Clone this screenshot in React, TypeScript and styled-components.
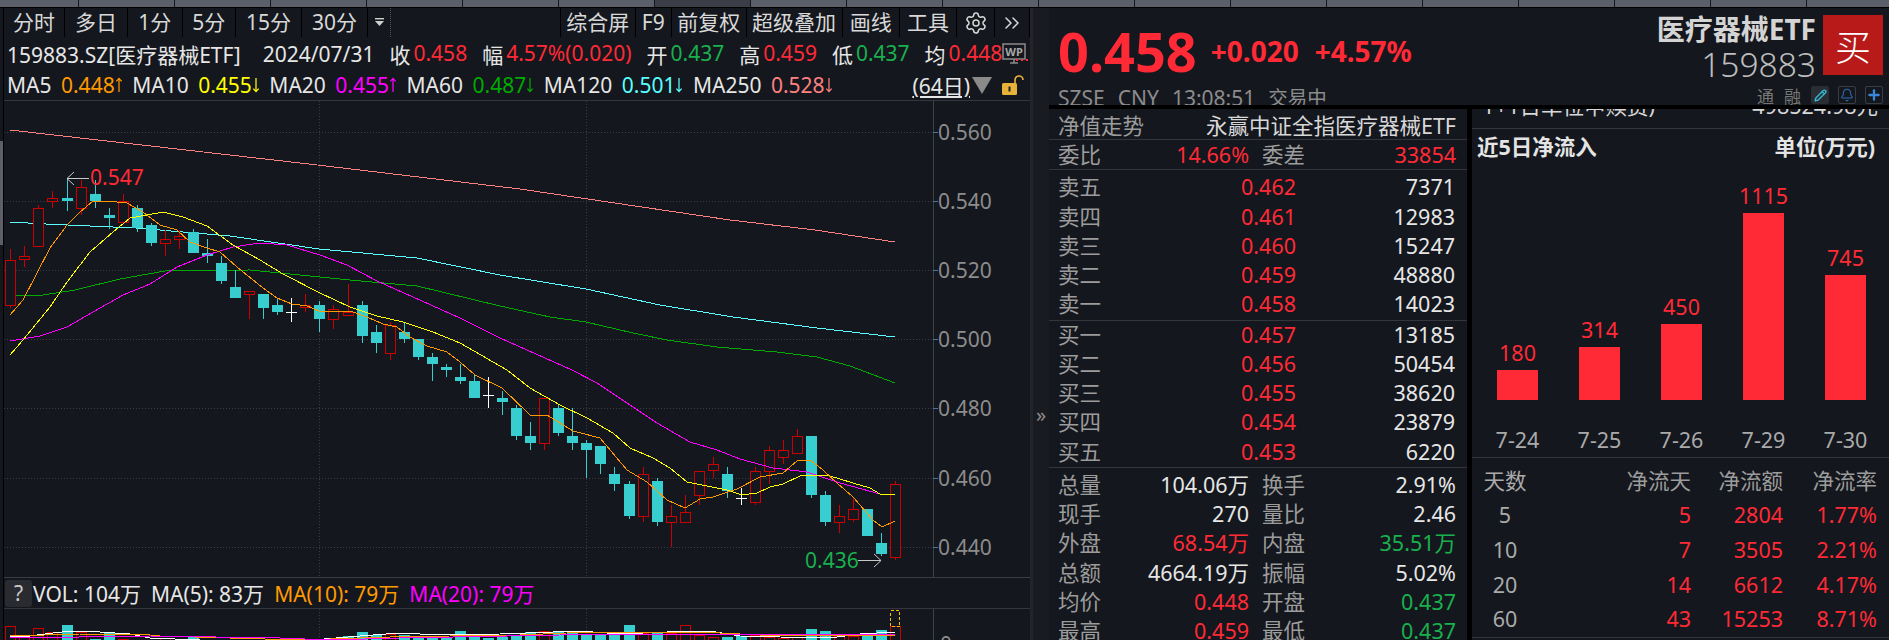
import * as React from "react";
import styled, { createGlobalStyle } from "styled-components";
import { Bell, ChevronsRight, Pencil, Plus, Settings } from "lucide-react";

const RED = "#ff2a36";
const GREEN = "#19b04d";
const BG = "#14171d";
const LINE = "#34363c";
const LABEL = "#9c9c9c";

const GlobalStyle = createGlobalStyle`
  html, body {
    margin: 0;
    background: ${BG};
    overflow: hidden;
  }
  body {
    font-family: "Noto Sans", "Noto Sans CJK SC", sans-serif;
    color: #e6e6e6;
  }
`;

const Page = styled.div`
  display: flex;
  flex-direction: column;
  width: 1889px;
  height: 640px;
  overflow: hidden;
  background: ${BG};
`;

const TabStrip = styled.div`
  display: flex;
  flex: none;
  height: 7px;
  border-bottom: 1px solid #000;
`;

const Tab = styled.div<{ $active?: boolean; $first?: boolean }>`
  flex: none;
  box-sizing: border-box;
  width: ${(p) => (p.$first ? 79 : 96)}px;
  background: ${(p) => (p.$active ? "#3b3e47" : "#5a5f6a")};
  border-right: 1px solid #14171d;
`;

const Body = styled.div`
  display: flex;
  flex: 1;
  min-height: 0;
`;

const LeftStrip = styled.div`
  flex: none;
  box-sizing: border-box;
  width: 4px;
  border-right: 1px solid #000;
  padding-top: 133px;
`;

const StripHandle = styled.div`
  width: 3px;
  height: 104px;
  background: #5e5f68;
`;

const ChartPane = styled.div`
  display: flex;
  flex: none;
  flex-direction: column;
  width: 1026px;
`;

const Toolbar = styled.div`
  display: flex;
  flex: none;
  height: 29px;
`;

const Tool = styled.div<{ $w: number }>`
  display: flex;
  flex: none;
  align-items: center;
  justify-content: center;
  box-sizing: border-box;
  width: ${(p) => p.$w}px;
  border-right: 1px solid #000;
  font-size: 21px;
  line-height: 29px;
  color: #d8d8d8;
  white-space: nowrap;
`;

const MoreCell = styled.div`
  display: flex;
  flex: none;
  align-items: center;
  justify-content: center;
  width: 22px;
  border-right: 1px dotted #555;
`;

const Spacer = styled.div`
  flex: 1;
  border-right: 1px solid #000;
`;

const InfoRow = styled.div`
  display: flex;
  flex: none;
  align-items: center;
  gap: 15px;
  height: 33px;
  padding-left: 3px;
  font-size: 21px;
  white-space: nowrap;
`;

const CodeText = styled.span`
  margin-right: 7px;
`;

const Field = styled.span`
  display: flex;
  gap: 3px;
`;

const Colored = styled.span<{ $c: string }>`
  color: ${(p) => p.$c};
`;

const WpBadge = styled.svg`
  position: absolute;
  left: 1002px;
  top: 43px;
`;

const MaRow = styled.div`
  display: flex;
  flex: none;
  align-items: center;
  gap: 9.5px;
  height: 30px;
  padding-left: 3px;
  border-bottom: 1px solid ${LINE};
  font-size: 21px;
  white-space: nowrap;
`;

const MaValue = styled.span<{ $c: string }>`
  display: flex;
  align-items: center;
  color: ${(p) => p.$c};
`;

const RangeLabel = styled.span`
  margin-left: auto;
  text-decoration: underline;
  text-underline-offset: 2px;
`;

const RangeTriangle = styled.span`
  width: 0;
  height: 0;
  margin-left: -8px;
  border-left: 10px solid transparent;
  border-right: 10px solid transparent;
  border-top: 17px solid #8a8a8a;
`;

const LockIcon = styled.svg`
  margin: 0 6px 0 0;
`;

const Plot = styled.svg`
  display: block;
  flex: none;
`;

const AxisText = styled.text`
  font-size: 21px;
  fill: #8c8c8c;
`;

const PeakText = styled.text<{ $c: string }>`
  font-size: 21px;
  fill: ${(p) => p.$c};
`;

const VolHeader = styled.div`
  display: flex;
  flex: none;
  box-sizing: border-box;
  align-items: center;
  gap: 10px;
  height: 32px;
  padding-left: 1px;
  border-top: 1px solid #3c3d43;
  border-bottom: 1px solid ${LINE};
  font-size: 21px;
  white-space: nowrap;
`;

const HelpButton = styled.span`
  display: flex;
  align-items: center;
  justify-content: center;
  width: 27px;
  height: 27px;
  margin-right: -9px;
  border-radius: 3px;
  background: #2a2b30;
  color: #c9c9c9;
`;

const Gutter = styled.div`
  display: flex;
  flex: none;
  align-items: center;
  justify-content: center;
  box-sizing: border-box;
  width: 19px;
  padding-top: 180px;
  border-left: 3px solid #23252b;
  background: #191b21;
  color: #8c8c8c;
  font-size: 20px;
`;

const QuotePane = styled.div`
  display: flex;
  flex: 1;
  flex-direction: column;
  min-width: 0;
`;

const QuoteHeader = styled.header`
  display: flex;
  flex: none;
  justify-content: space-between;
  height: 97px;
  overflow: hidden;
  border-bottom: 4px solid #000;
`;

const PriceBlock = styled.div`
  padding: 8px 0 0 9px;
`;

const PriceLine = styled.div`
  display: flex;
  align-items: center;
  height: 70px;
  color: ${RED};
  font-weight: 700;
  white-space: nowrap;
`;

const BigPrice = styled.span`
  margin-right: 14px;
  font-size: 54px;
`;

const Change = styled.span`
  margin-right: 16px;
  font-size: 28px;
`;

const MarketLine = styled.div`
  display: flex;
  gap: 13px;
  font-size: 21px;
  line-height: 24px;
  color: #8c8c8c;
  white-space: nowrap;
`;

const MarketState = styled.span`
  font-size: 19.5px;
`;

const NameBlock = styled.div`
  display: flex;
  flex-direction: column;
  align-items: flex-end;
  padding: 7px 6px 0 0;
`;

const NameRow = styled.div`
  display: flex;
  gap: 7px;
`;

const NameCol = styled.div`
  display: flex;
  flex-direction: column;
  align-items: flex-end;
  margin-top: -4px;
`;

const StockName = styled.div`
  font-size: 28px;
  font-weight: 700;
  line-height: 36px;
  color: #d4d4d4;
  white-space: nowrap;
`;

const StockCode = styled.div`
  font-size: 33.5px;
  font-weight: 300;
  line-height: 34px;
  color: #bdbdbd;
`;

const BuyButton = styled.div`
  display: flex;
  align-items: center;
  justify-content: center;
  width: 60px;
  height: 60px;
  background: #b81a1a;
  color: #fff;
  font-size: 36px;
  font-weight: 300;
`;

const MetaRow = styled.div`
  display: flex;
  align-items: center;
  gap: 9px;
  height: 18px;
  margin-top: 5px;
  font-size: 17px;
  color: #777;
`;

const MetaWord = styled.span`
  margin-right: 1px;
`;

const MetaIcon = styled.span<{ $c: string; $fill?: boolean }>`
  display: flex;
  align-items: center;
  justify-content: center;
  box-sizing: border-box;
  width: 18px;
  height: 18px;
  border-radius: 2px;
  background: ${(p) => (p.$fill ? "#2a2d33" : "transparent")};
  border: 1px solid ${(p) => (p.$fill ? "#2a2d33" : "#3a3d44")};
  color: ${(p) => p.$c};
`;

const Columns = styled.div`
  display: flex;
  flex: 1;
  min-height: 0;
`;

const OrderBook = styled.section`
  flex: none;
  width: 418px;
  border-right: 5px solid #000;
  font-size: 21.5px;
  color: ${LABEL};
`;

const BookTitle = styled.div`
  display: flex;
  justify-content: space-between;
  box-sizing: border-box;
  height: 31px;
  padding: 0 11px 0 9px;
  border-bottom: 1px solid ${LINE};
  line-height: 33px;
  white-space: nowrap;
`;

const FundName = styled.span`
  color: #d8d8d8;
`;

const Block = styled.div<{ $pad: number }>`
  padding-top: ${(p) => p.$pad}px;
  border-bottom: 1px solid ${LINE};
`;

const StatsBlock = styled.div`
  padding-top: 2px;
`;

const StatRow = styled.div`
  display: grid;
  grid-template-columns: 60px 131px 73px 134px;
  height: 29.25px;
  padding-left: 9px;
  line-height: 29px;
  white-space: nowrap;
`;

const PriceRow = styled.div`
  display: grid;
  grid-template-columns: 60px 178px 159px;
  height: 29.25px;
  padding-left: 9px;
  line-height: 28px;
`;

const Label = styled.span<{ $indent?: boolean }>`
  padding-left: ${(p) => (p.$indent ? 13 : 0)}px;
`;

const Num = styled.span<{ $c?: string }>`
  text-align: right;
  color: ${(p) => p.$c ?? "#e6e6e6"};
`;

const FundPanel = styled.section`
  flex: 1;
  min-width: 0;
  font-size: 21.5px;
`;

const ClippedRow = styled.div`
  box-sizing: border-box;
  height: 20px;
  overflow: hidden;
  border-bottom: 1px solid ${LINE};
`;

const ClippedInner = styled.div`
  display: flex;
  justify-content: space-between;
  margin-top: -15px;
  padding: 0 11px 0 11px;
  font-size: 21.5px;
  line-height: 24px;
  color: #d8d8d8;
`;

const FlowTitle = styled.div`
  display: flex;
  justify-content: space-between;
  height: 36px;
  padding: 0 14px 0 5px;
  font-weight: 700;
  line-height: 35px;
  color: #e4e4e4;
`;

const BarChart = styled.div`
  display: grid;
  grid-template-columns: repeat(5, 82px);
  align-items: end;
  height: 235px;
  padding-left: 4.5px;
`;

const BarCol = styled.div`
  display: flex;
  flex-direction: column;
  align-items: center;
`;

const BarValue = styled.span`
  margin-bottom: 4px;
  line-height: 26px;
  color: ${RED};
`;

const Bar = styled.div`
  width: 41px;
  background: ${RED};
`;

const DateRow = styled.div`
  display: grid;
  grid-template-columns: repeat(5, 82px);
  box-sizing: border-box;
  height: 58px;
  padding: 27px 0 0 4.5px;
  border-bottom: 1px solid ${LINE};
  line-height: 26px;
  color: #aaa;
  text-align: center;
`;

const FlowTable = styled.div`
  padding-top: 5.5px;
`;

const FlowRow = styled.div`
  display: grid;
  grid-template-columns: 66px 153px 92px 94px;
  height: 34.7px;
  line-height: 34.7px;
  text-align: right;
`;

const FlowDays = styled.span`
  color: #aaa;
  text-align: center;
`;

const FlowHead = styled.span`
  color: ${LABEL};
`;

const FlowNum = styled.span`
  color: ${RED};
`;

const FlowEnd = styled.div`
  border-top: 1px solid ${LINE};
`;

type Candle = [string, number, number, number, number];

const candles: Candle[] = [
  ["r", 249, 260, 305, 308], ["r", 246, 256, 259, 267], ["r", 205, 208, 246, 246], ["r", 191, 198, 201, 208],
  ["t", 178, 198, 201, 211], ["r", 180, 187, 208, 215], ["t", 180, 194, 201, 208], ["t", 208, 215, 218, 229],
  ["r", 194, 201, 222, 222], ["t", 205, 208, 228, 232], ["t", 223, 225, 243, 246], ["r", 230, 239, 243, 256],
  ["r", 230, 236, 239, 249], ["t", 229, 232, 253, 253], ["t", 239, 253, 256, 263], ["t", 256, 263, 281, 284],
  ["t", 270, 287, 298, 298], ["r", 291, 291, 294, 319], ["t", 294, 294, 308, 319], ["t", 298, 305, 312, 315],
  ["w", 298, 312, 312, 322], ["r", 294, 305, 307, 312], ["t", 301, 305, 319, 332], ["r", 305, 309, 319, 329],
  ["r", 284, 312, 315, 315], ["t", 301, 305, 336, 343], ["t", 325, 332, 343, 353], ["r", 322, 325, 353, 360],
  ["t", 322, 332, 339, 343], ["t", 339, 339, 357, 360], ["t", 353, 357, 364, 381], ["t", 364, 367, 370, 377],
  ["t", 364, 377, 381, 384], ["t", 374, 381, 398, 398], ["w", 377, 395, 395, 408], ["t", 391, 398, 402, 415],
  ["t", 405, 408, 436, 440], ["t", 422, 436, 443, 450], ["r", 398, 398, 443, 450], ["t", 405, 408, 433, 436],
  ["t", 408, 436, 443, 450], ["t", 440, 443, 450, 478], ["t", 446, 446, 464, 474], ["t", 467, 474, 484, 491],
  ["t", 481, 484, 516, 519], ["r", 467, 474, 516, 522], ["t", 478, 481, 522, 526], ["r", 505, 516, 522, 547],
  ["r", 495, 512, 522, 522], ["r", 471, 471, 495, 505], ["r", 457, 464, 470, 478], ["t", 467, 474, 491, 498],
  ["w", 488, 498, 498, 505], ["r", 467, 471, 502, 505], ["r", 446, 450, 471, 484], ["r", 440, 450, 457, 464],
  ["r", 429, 436, 453, 453], ["t", 436, 436, 495, 498], ["t", 491, 495, 522, 526], ["r", 505, 516, 522, 533],
  ["r", 498, 509, 519, 522], ["t", 509, 509, 536, 536], ["t", 533, 543, 554, 556], ["r", 481, 484, 557, 560],
];

const volumeTops = [
  626, 636, 628, 632, 625, 632, 639, 633, 639, 641, 641, 638, 641, 637, 641, 641,
  641, 641, 641, 641, 641, 641, 641, 641, 636, 632, 635, 634, 635, 636, 637, 638,
  631, 635, 638, 637, 636, 632, 631, 632, 633, 634, 634, 634, 625, 633, 632, 633,
  625, 635, 637, 637, 636, 635, 637, 638, 637, 629, 631, 636, 636, 633, 630, 626,
];

const ma5 = "10,315 23,300 50,248 67,225 80,212 93,201 107,201 127,203 143,212 160,225 177,230 190,242 207,248 220,252 237,267 263,288 277,298 292,304 307,306 319,311 350,311 367,317 383,324 397,327 410,337 427,346 447,352 460,362 475,375 502,388 530,415 547,415 573,431 600,438 627,470 647,482 667,500 685,508 700,499 713,497 737,489 760,477 783,473 797,461 810,460 823,470 837,483 853,497 873,520 882,527 895,521";
const ma10 = "10,355 23,340 50,307 67,282 90,252 113,232 130,218 147,215 163,212 183,217 207,226 233,245 260,260 283,274 320,293 350,307 377,316 403,322 433,332 460,343 507,370 530,388 560,405 587,418 613,433 630,448 653,458 670,468 687,482 707,486 727,490 742,495 757,493 770,487 783,484 800,476 817,475 830,476 853,483 870,488 880,494 895,495";
const ma20 = "10,341 40,336 67,327 93,312 123,295 150,284 177,267 207,255 233,247 260,243 287,245 320,255 347,265 377,281 413,297 460,318 500,338 572,370 597,383 627,403 657,423 690,442 717,450 740,459 773,468 807,472 840,483 880,494 895,495";
const ma60 = "10,296 40,295.5 75,290 120,279 165,271 200,270.5 250,270 290,274 350,280 417,286 500,306 550,317 586,322 633,333 667,340 717,347 777,352 817,357 850,366 895,383";
const ma120 = "10,222 46,224 90,226 136,228 230,236 319,249 417,258 500,275 586,289 660,305 733,317 817,328 895,337";
const ma250 = "10,130 309,164 520,189 730,220 815,230 895,242";
const volWhite = "10,637 30,636 45,634 70,631 100,632 130,634 150,638 200,640 300,641 360,636 400,633 440,635 500,634 580,631 620,634 690,631 710,631 740,636 780,637 830,638 860,634 895,632";
const volOrange = "10,636 80,634 140,634 160,636 300,640 390,637 450,636 520,635 590,632 700,632 720,633 760,635 895,635";
const volMagenta = "10,638 150,636 280,638 330,640 400,638 560,635 895,634";

const gridYs = [132, 201, 270, 339, 408, 478, 547];
const axisLabels = ["0.560", "0.540", "0.520", "0.500", "0.480", "0.460", "0.440"];

const candleX = (i: number) => Math.round(10.3 + 14.05 * i);
const teal = "#38cdcf";
const candleRed = "#cc0000";

const CandleMark = ({ c, i }: { c: Candle; i: number }) => {
  const [kind, high, top, bottom, low] = c;
  const x = candleX(i);
  if (kind === "w") {
    return (
      <g stroke="#fff">
        <line x1={x + 0.5} x2={x + 0.5} y1={high} y2={low} />
        <line x1={x - 5} x2={x + 6} y1={top + 0.5} y2={top + 0.5} />
      </g>
    );
  }
  const color = kind === "r" ? candleRed : teal;
  return (
    <g>
      <line x1={x + 0.5} x2={x + 0.5} y1={high} y2={top} stroke={color} />
      <line x1={x + 0.5} x2={x + 0.5} y1={bottom} y2={low} stroke={color} />
      {kind === "r" ? (
        <rect x={x - 4.5} y={top + 0.5} width={10} height={bottom - top} fill={BG} stroke={color} />
      ) : (
        <rect x={x - 5} y={top} width={11} height={bottom - top} fill={color} />
      )}
    </g>
  );
};

const MaLine = ({ points, color }: { points: string; color: string }) => (
  <polyline points={points} fill="none" stroke={color} strokeWidth={1} />
);

const PriceChart = () => (
  <Plot width={1026} height={476} viewBox="4 101 1026 476" shapeRendering="crispEdges">
    {gridYs.map((y) => (
      <line key={y} x1={4} x2={933} y1={y + 0.5} y2={y + 0.5} stroke="#3a3c42" strokeDasharray="1 2" />
    ))}
    <line x1={319.5} x2={319.5} y1={101} y2={577} stroke="#3a3c42" strokeDasharray="1 2" />
    <line x1={586.5} x2={586.5} y1={101} y2={577} stroke="#3a3c42" strokeDasharray="1 2" />
    <line x1={933.5} x2={933.5} y1={101} y2={577} stroke="#3f4147" />
    {gridYs.map((y, i) => (
      <g key={y}>
        <line x1={933} x2={938} y1={y + 0.5} y2={y + 0.5} stroke="#5570a0" />
        <AxisText x={938} y={y + 8} shapeRendering="auto">
          {axisLabels[i]}
        </AxisText>
      </g>
    ))}
    <MaLine points={ma250} color="#ff8080" />
    <MaLine points={ma120} color="#5affff" />
    <MaLine points={ma60} color="#00aa00" />
    {candles.map((c, i) => (
      <CandleMark key={i} c={c} i={i} />
    ))}
    <MaLine points={ma20} color="#ff00ff" />
    <MaLine points={ma10} color="#ffff00" />
    <MaLine points={ma5} color="#ff9900" />
    <g stroke="#c8c8c8" fill="none" shapeRendering="auto">
      <path d="M89 178.5H67M74 172l-7 6.5 7 6.5" />
      <path d="M858 560.5h23M874 554l7 6.5-7 6.5" />
    </g>
    <PeakText x={90} y={185} $c={RED} shapeRendering="auto">
      0.547
    </PeakText>
    <PeakText x={805} y={568} $c={GREEN} shapeRendering="auto">
      0.436
    </PeakText>
  </Plot>
);

const VolumeChart = () => (
  <Plot width={1026} height={31} viewBox="4 609 1026 31" shapeRendering="crispEdges">
    <line x1={319.5} x2={319.5} y1={609} y2={640} stroke="#3a3c42" strokeDasharray="1 2" />
    <line x1={586.5} x2={586.5} y1={609} y2={640} stroke="#3a3c42" strokeDasharray="1 2" />
    <line x1={933.5} x2={933.5} y1={609} y2={640} stroke="#3f4147" />
    {volumeTops.map((top, i) => {
      const x = candleX(i);
      const isRed = candles[i][0] === "r" && i !== 24;
      return isRed ? (
        <rect key={i} x={x - 4.5} y={top + 0.5} width={10} height={30} fill={BG} stroke={candleRed} />
      ) : (
        <rect key={i} x={x - 5} y={top} width={11} height={30} fill={teal} />
      );
    })}
    <rect x={890.5} y={610.5} width={9} height={16} fill="none" stroke="#ffc000" strokeDasharray="3 2" />
    <MaLine points={volWhite} color="#fff" />
    <MaLine points={volOrange} color="#ff9900" />
    <MaLine points={volMagenta} color="#ff00ff" />
    <AxisText x={940} y={652} shapeRendering="auto">
      0
    </AxisText>
  </Plot>
);

const TrendArrow = ({ up }: { up: boolean }) => (
  <svg width="8" height="18" viewBox="0 0 9 18" fill="none" stroke="currentColor" strokeWidth="1.4">
    {up ? <path d="M4.5 17V1.5M1.5 5l3-3.5 3 3.5" /> : <path d="M4.5 1v15.5M1.5 13l3 3.5 3-3.5" />}
  </svg>
);

const maItems: [string, string, string, boolean][] = [
  ["MA5", "0.448", "#ff9900", true],
  ["MA10", "0.455", "#ffff00", false],
  ["MA20", "0.455", "#ff00ff", true],
  ["MA60", "0.487", "#00aa00", false],
  ["MA120", "0.501", "#5affff", false],
  ["MA250", "0.528", "#ff8080", false],
];

const asks: [string, string, string][] = [
  ["卖五", "0.462", "7371"],
  ["卖四", "0.461", "12983"],
  ["卖三", "0.460", "15247"],
  ["卖二", "0.459", "48880"],
  ["卖一", "0.458", "14023"],
];

const bids: [string, string, string][] = [
  ["买一", "0.457", "13185"],
  ["买二", "0.456", "50454"],
  ["买三", "0.455", "38620"],
  ["买四", "0.454", "23879"],
  ["买五", "0.453", "6220"],
];

const stats: [string, string, string | undefined, string, string, string | undefined][] = [
  ["总量", "104.06万", undefined, "换手", "2.91%", undefined],
  ["现手", "270", undefined, "量比", "2.46", undefined],
  ["外盘", "68.54万", RED, "内盘", "35.51万", GREEN],
  ["总额", "4664.19万", undefined, "振幅", "5.02%", undefined],
  ["均价", "0.448", RED, "开盘", "0.437", GREEN],
  ["最高", "0.459", RED, "最低", "0.437", GREEN],
];

const flows = [
  { date: "7-24", value: 180 },
  { date: "7-25", value: 314 },
  { date: "7-26", value: 450 },
  { date: "7-29", value: 1115 },
  { date: "7-30", value: 745 },
];

const flowRows = [
  ["5", "5", "2804", "1.77%"],
  ["10", "7", "3505", "2.21%"],
  ["20", "14", "6612", "4.17%"],
  ["60", "43", "15253", "8.71%"],
];

const BookRows = ({ rows }: { rows: [string, string, string][] }) => (
  <>
    {rows.map(([name, price, size]) => (
      <PriceRow key={name}>
        <Label>{name}</Label>
        <Num $c={RED}>{price}</Num>
        <Num>{size}</Num>
      </PriceRow>
    ))}
  </>
);

export default function App() {
  return (
    <Page>
      <GlobalStyle />
      <TabStrip>
        {Array.from({ length: 20 }, (_, i) => (
          <Tab key={i} $first={i === 0} $active={i === 7} />
        ))}
      </TabStrip>
      <Body>
        <LeftStrip>
          <StripHandle />
        </LeftStrip>
        <ChartPane>
          <Toolbar>
            <Tool $w={61}>分时</Tool>
            <Tool $w={63}>多日</Tool>
            <Tool $w={54.5}>1分</Tool>
            <Tool $w={53.5}>5分</Tool>
            <Tool $w={66}>15分</Tool>
            <Tool $w={66}>30分</Tool>
            <MoreCell>
              <svg width="9" height="9" viewBox="0 0 9 9" fill="#d0d0d0">
                <rect x="0" y="0" width="9" height="1.4" />
                <path d="M0 3h9L4.5 8z" />
              </svg>
            </MoreCell>
            <Spacer />
            <Tool $w={74.5}>综合屏</Tool>
            <Tool $w={36.5}>F9</Tool>
            <Tool $w={74.5}>前复权</Tool>
            <Tool $w={96}>超级叠加</Tool>
            <Tool $w={57.5}>画线</Tool>
            <Tool $w={57}>工具</Tool>
            <Tool $w={38}>
              <Settings size={24} strokeWidth={1.5} />
            </Tool>
            <Tool $w={35}>
              <ChevronsRight size={24} strokeWidth={1.5} />
            </Tool>
          </Toolbar>
          <InfoRow>
            <CodeText>159883.SZ[医疗器械ETF]</CodeText>
            <span>2024/07/31</span>
            <Field>
              收<Colored $c={RED}>0.458</Colored>
            </Field>
            <Field>
              幅<Colored $c={RED}>4.57%(0.020)</Colored>
            </Field>
            <Field>
              开<Colored $c={GREEN}>0.437</Colored>
            </Field>
            <Field>
              高<Colored $c={RED}>0.459</Colored>
            </Field>
            <Field>
              低<Colored $c={GREEN}>0.437</Colored>
            </Field>
            <Field>
              均<Colored $c={RED}>0.448</Colored>
            </Field>
          </InfoRow>
          <WpBadge width="26" height="22" viewBox="0 0 26 22" fill="none">
            <rect x="1" y="1" width="22" height="15" stroke="#8a8a8a" strokeWidth="1.5" />
            <text x="12" y="13" fontSize="11" fontWeight="700" fill="#a8a8a8" textAnchor="middle">
              WP
            </text>
            <path d="M8 20h8M12 16v4" stroke="#8a8a8a" strokeWidth="1.5" />
            <path d="M14 17h2M19 17h2M24 17h2" stroke={RED} strokeWidth="2" />
          </WpBadge>
          <MaRow>
            {maItems.map(([name, value, color, up]) => (
              <React.Fragment key={name}>
                <span>{name}</span>
                <MaValue $c={color}>
                  {value}
                  <TrendArrow up={up} />
                </MaValue>
              </React.Fragment>
            ))}
            <RangeLabel>(64日)</RangeLabel>
            <RangeTriangle />
            <LockIcon width="23" height="20" viewBox="0 0 23 20" fill="none">
              <path d="M14 8V5a4 4 0 0 1 8 0" stroke="#e8b23a" strokeWidth="1.6" />
              <rect x="1" y="8" width="15" height="12" rx="1.5" fill="#e8b23a" />
              <rect x="7.5" y="11.5" width="2" height="5" fill="#222" />
            </LockIcon>
          </MaRow>
          <PriceChart />
          <VolHeader>
            <HelpButton>?</HelpButton>
            <span>VOL: 104万</span>
            <span>MA(5): 83万</span>
            <Colored $c="#ff9900">MA(10): 79万</Colored>
            <Colored $c="#ff00ff">MA(20): 79万</Colored>
          </VolHeader>
          <VolumeChart />
        </ChartPane>
        <Gutter>»</Gutter>
        <QuotePane>
          <QuoteHeader>
            <PriceBlock>
              <PriceLine>
                <BigPrice>0.458</BigPrice>
                <Change>+0.020</Change>
                <Change>+4.57%</Change>
              </PriceLine>
              <MarketLine>
                <span>SZSE</span>
                <span>CNY</span>
                <span>13:08:51</span>
                <MarketState>交易中</MarketState>
              </MarketLine>
            </PriceBlock>
            <NameBlock>
              <NameRow>
                <NameCol>
                  <StockName>医疗器械ETF</StockName>
                  <StockCode>159883</StockCode>
                </NameCol>
                <BuyButton>买</BuyButton>
              </NameRow>
              <MetaRow>
                <MetaWord>通</MetaWord>
                <MetaWord>融</MetaWord>
                <MetaIcon $c="#35b8d0" $fill>
                  <Pencil size={13} strokeWidth={2.6} />
                </MetaIcon>
                <MetaIcon $c="#2f6fb5">
                  <Bell size={14} strokeWidth={1.8} />
                </MetaIcon>
                <MetaIcon $c="#3a86d8">
                  <Plus size={16} strokeWidth={3.4} />
                </MetaIcon>
              </MetaRow>
            </NameBlock>
          </QuoteHeader>
          <Columns>
            <OrderBook>
              <BookTitle>
                <span>净值走势</span>
                <FundName>永赢中证全指医疗器械ETF</FundName>
              </BookTitle>
              <Block $pad={0}>
                <StatRow>
                  <Label>委比</Label>
                  <Num $c={RED}>14.66%</Num>
                  <Label $indent>委差</Label>
                  <Num $c={RED}>33854</Num>
                </StatRow>
              </Block>
              <Block $pad={3}>
                <BookRows rows={asks} />
              </Block>
              <Block $pad={0}>
                <BookRows rows={bids} />
              </Block>
              <StatsBlock>
                {stats.map(([name, value, color, name2, value2, color2]) => (
                  <StatRow key={name}>
                    <Label>{name}</Label>
                    <Num $c={color}>{value}</Num>
                    <Label $indent>{name2}</Label>
                    <Num $c={color2}>{value2}</Num>
                  </StatRow>
                ))}
              </StatsBlock>
            </OrderBook>
            <FundPanel>
              <ClippedRow>
                <ClippedInner>
                  <span>T+1日单位申赎费)</span>
                  <span>498524.98元</span>
                </ClippedInner>
              </ClippedRow>
              <FlowTitle>
                <span>近5日净流入</span>
                <span>单位(万元)</span>
              </FlowTitle>
              <BarChart>
                {flows.map((f) => (
                  <BarCol key={f.date}>
                    <BarValue>{f.value}</BarValue>
                    <Bar style={{ height: Math.round(f.value * 0.168) }} />
                  </BarCol>
                ))}
              </BarChart>
              <DateRow>
                {flows.map((f) => (
                  <span key={f.date}>{f.date}</span>
                ))}
              </DateRow>
              <FlowTable>
                <FlowRow>
                  <FlowDays>天数</FlowDays>
                  <FlowHead>净流天</FlowHead>
                  <FlowHead>净流额</FlowHead>
                  <FlowHead>净流率</FlowHead>
                </FlowRow>
                {flowRows.map(([days, d, amount, rate]) => (
                  <FlowRow key={days}>
                    <FlowDays>{days}</FlowDays>
                    <FlowNum>{d}</FlowNum>
                    <FlowNum>{amount}</FlowNum>
                    <FlowNum>{rate}</FlowNum>
                  </FlowRow>
                ))}
                <FlowEnd />
              </FlowTable>
            </FundPanel>
          </Columns>
        </QuotePane>
      </Body>
    </Page>
  );
}
